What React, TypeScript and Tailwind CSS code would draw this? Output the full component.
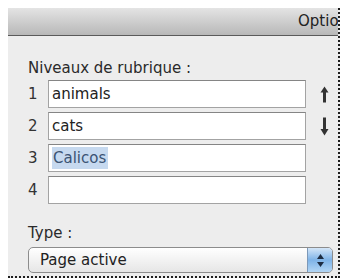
import React from "react";

const font = { fontFamily: '"DejaVu Sans", "Liberation Sans", sans-serif' };

function UpArrow() {
  return (
    <svg width="9" height="17" viewBox="0 0 9 17" className="block">
      <path d="M4.5 0.5 L8.5 6.5 L6 6.5 L6 16.5 L3 16.5 L3 6.5 L0.5 6.5 Z" fill="#333" />
    </svg>
  );
}

function DownArrow() {
  return (
    <svg width="9" height="19" viewBox="0 0 9 19" className="block">
      <path d="M4.5 18.5 L8.5 12 L6 12 L6 0.5 L3 0.5 L3 12 L0.5 12 Z" fill="#333" />
    </svg>
  );
}

function Row({ n, children, arrow }: { n: string; children?: React.ReactNode; arrow?: React.ReactNode }) {
  return (
    <div className="flex items-center h-[28px]">
      <div className="w-[20px] text-[15px] text-[#333]">{n}</div>
      <div className="w-[258px] h-full bg-white border border-[#a3a3a3] border-t-[#858585] flex items-center px-[3px] text-[15px] text-[#222]">
        {children}
      </div>
      <div className="ml-[14px] w-[9px] flex justify-center">{arrow}</div>
    </div>
  );
}

export default function App() {
  return (
    <div className="w-[345px] h-[278px] bg-white pt-[8px] pl-[8px] overflow-hidden" style={font}>
      <div className="w-[332px] h-[270px] bg-[#ededed] border-r-2 border-b-2 border-dotted border-[#1e1e1e] flex flex-col">
        <div className="h-[28px] shrink-0 bg-gradient-to-b from-[#e4e4e4] to-[#b8b8b8] border-b border-[#5a5a5a] flex items-center pl-[290px] overflow-hidden whitespace-nowrap">
          <span className="text-[15px] text-[#222]">Optio</span>
        </div>
        <div className="pl-[20px] pt-[23px] flex flex-col">
          <div className="h-[18px] leading-[18px] text-[15px] text-[#2a2a2a] mb-[3px]">Niveaux de rubrique :</div>
          <div className="flex flex-col gap-[4px]">
            <Row n="1" arrow={<UpArrow />}>animals</Row>
            <Row n="2" arrow={<DownArrow />}>cats</Row>
            <Row n="3">
              <span className="inline-block leading-[22px] bg-[#c6d9ef] text-[#3b5373] pl-[1px] pr-[2px]">Calicos</span>
            </Row>
            <Row n="4" />
          </div>
          <div className="h-[18px] leading-[18px] text-[15px] text-[#2a2a2a] mt-[20px]">Type :</div>
          <div className="mt-[5px] w-[305px] h-[26px] rounded-[5px] border border-[#8c8c8c] bg-gradient-to-b from-white to-[#e6e6e6] flex items-center overflow-hidden">
            <div className="flex-1 pl-[11px] text-[15px] text-[#222]">Page active</div>
            <div className="w-[25px] h-full bg-gradient-to-b from-[#d4e6f8] via-[#7eb3e7] to-[#b2d6f5] border-l border-[#7c98b8] flex flex-col items-center justify-center gap-[3px]">
              <svg width="7" height="5" viewBox="0 0 7 5" className="block">
                <path d="M3.5 0 L7 5 L0 5 Z" fill="#1d2c42" />
              </svg>
              <svg width="7" height="5" viewBox="0 0 7 5" className="block">
                <path d="M0 0 L7 0 L3.5 5 Z" fill="#1d2c42" />
              </svg>
            </div>
          </div>
        </div>
      </div>
    </div>
  );
}
